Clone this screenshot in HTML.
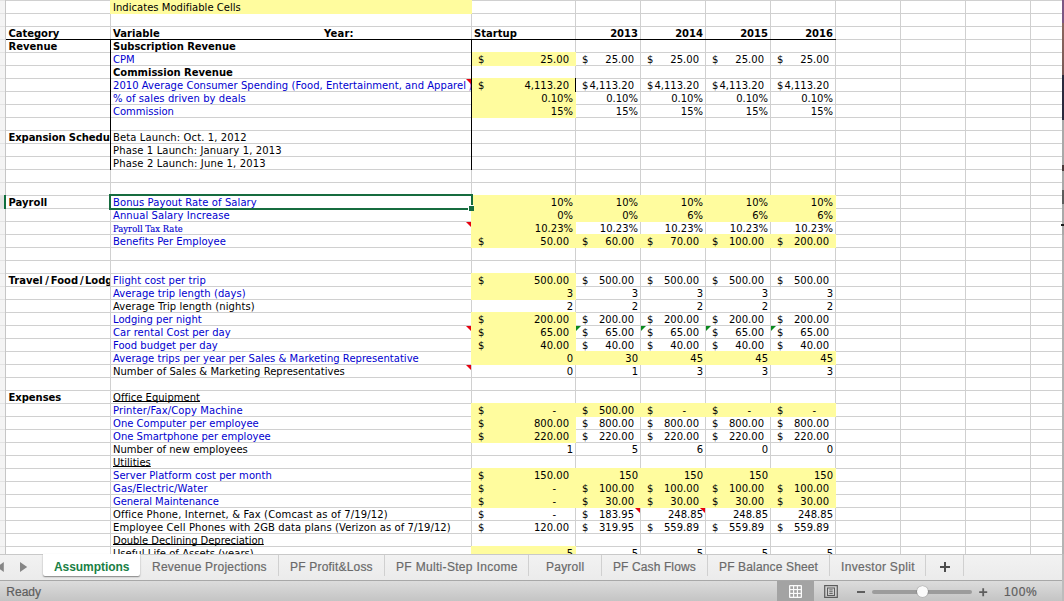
<!DOCTYPE html>
<html><head><meta charset="utf-8"><title>Assumptions</title>
<style>
html,body{margin:0;padding:0;}
body{width:1064px;height:601px;overflow:hidden;background:#fff;position:relative;font-family:"DejaVu Sans","Liberation Sans",sans-serif;font-size:10px;color:#000;}
#sheet{position:absolute;left:0;top:0;width:1064px;height:554px;overflow:hidden;background:#fff;}
#hl{position:absolute;left:0;top:0;width:1064px;height:560px;background:repeating-linear-gradient(to bottom,#d0d0d0 0,#d0d0d0 1px,transparent 1px,transparent 13px);}
.v{position:absolute;top:0;width:1px;height:554px;background:#d0d0d0;}
.y{position:absolute;background:#fffc9e;}
.k{position:absolute;background:#000;}
.t{position:absolute;white-space:pre;line-height:13px;height:13px;margin-top:1px;}
.b{font-weight:bold;}
.bl{color:#0000d0;}
.u{text-decoration:underline;text-decoration-thickness:1px;text-underline-offset:0;text-decoration-skip-ink:none;}
.se{font-family:"DejaVu Serif","Liberation Serif",serif;font-size:8.4px;margin-top:1.5px;-webkit-text-stroke:.15px currentColor;}
.rt{position:absolute;width:0;height:0;border-top:5px solid #e6000f;border-left:5px solid transparent;}
.gt{position:absolute;width:0;height:0;border-top:5px solid #0a8a1e;border-right:5px solid transparent;}
#gut{position:absolute;left:0;top:0;width:5px;height:554px;background:repeating-linear-gradient(to bottom,#e3e3e3 0,#e3e3e3 1px,#f4f4f4 1px,#f4f4f4 13px);}
#tabs{position:absolute;left:0;top:554px;width:1064px;height:26px;background:linear-gradient(#f2f2f2,#ebebeb);border-top:1px solid #c9c9c9;box-sizing:border-box;font-family:"Liberation Sans",sans-serif;font-size:12px;color:#6a6a6a;}
#tabs .tb{position:absolute;top:4px;line-height:16px;white-space:pre;-webkit-text-stroke:.2px currentColor;}
#tabs .sp{position:absolute;top:0;width:1px;height:21px;background:#d0d0d0;}
#status{position:absolute;left:0;top:580px;width:1064px;height:21px;background:linear-gradient(#dcdcdc,#c4c4c4);border-top:1px solid #a8a8a8;box-sizing:border-box;font-family:"Liberation Sans",sans-serif;font-size:12px;color:#5e5e5e;}
</style></head><body>
<div id="sheet">

<div id="hl"></div>
<div class="v" style="left:5px"></div>
<div class="v" style="left:110px"></div>
<div class="v" style="left:471px"></div>
<div class="v" style="left:575px"></div>
<div class="v" style="left:640px"></div>
<div class="v" style="left:705px"></div>
<div class="v" style="left:770px"></div>
<div class="v" style="left:835px"></div>
<div class="v" style="left:900px"></div>
<div class="v" style="left:965px"></div>
<div class="v" style="left:1030px"></div>
<div id="gut"></div>
<div class="v" style="left:5px;background:#c6c6c6"></div>
<div class="y" style="left:110px;top:0;width:362px;height:14px"></div>
<div class="y" style="left:471px;top:52px;width:105px;height:14px"></div>
<div class="y" style="left:471px;top:78px;width:105px;height:40px"></div>
<div class="y" style="left:471px;top:195px;width:365px;height:27px"></div>
<div class="y" style="left:471px;top:221px;width:105px;height:14px"></div>
<div class="y" style="left:471px;top:234px;width:365px;height:14px"></div>
<div class="y" style="left:471px;top:273px;width:105px;height:27px"></div>
<div class="y" style="left:471px;top:312px;width:105px;height:40px"></div>
<div class="y" style="left:471px;top:351px;width:365px;height:14px"></div>
<div class="y" style="left:471px;top:403px;width:365px;height:14px"></div>
<div class="y" style="left:471px;top:416px;width:105px;height:27px"></div>
<div class="y" style="left:471px;top:468px;width:365px;height:40px"></div>
<div class="y" style="left:471px;top:546px;width:105px;height:14px"></div>
<div class="k" style="left:6px;top:39px;width:830px;height:1px"></div>
<div class="k" style="left:110px;top:39px;width:1px;height:131px"></div>
<div class="k" style="left:471px;top:39px;width:1px;height:131px"></div>
<div class="k" style="left:575px;top:78px;width:1px;height:14px"></div>
<span id="t1" class="t b" style="letter-spacing:-0.041px;left:8.5px;top:26px;">Category</span>
<span id="t2" class="t b" style="letter-spacing:-0.000px;left:8.5px;top:39px;">Revenue</span>
<div style="position:absolute;left:6px;top:130px;width:104px;height:14px;overflow:hidden">
<span id="t3" class="t b" style="letter-spacing:-.08px;left:2.5px;top:0px;">Expansion Schedule</span>
</div>
<span id="t4" class="t b" style="letter-spacing:0.017px;left:8.5px;top:195px;">Payroll</span>
<div style="position:absolute;left:6px;top:273px;width:104px;height:14px;overflow:hidden">
<span id="t5" class="t b" style="left:2.5px;top:0px;">Travel<span style="margin:0 1.8px 0 2.7px">/</span>Food<span style="margin:0 1.2px 0 2px">/</span>Lodging</span>
</div>
<span id="t6" class="t b" style="letter-spacing:-0.030px;left:8.5px;top:390px;">Expenses</span>
<span id="t7" class="t " style="letter-spacing:0.025px;left:113px;top:0px;">Indicates Modifiable Cells</span>
<span id="t8" class="t b" style="letter-spacing:0.046px;left:113px;top:26px;">Variable</span>
<span id="t9" class="t b" style="letter-spacing:0.203px;left:324px;top:26px;">Year:</span>
<span id="t10" class="t b" style="letter-spacing:-0.028px;left:113px;top:39px;">Subscription Revenue</span>
<span id="t11" class="t bl" style="letter-spacing:0.051px;left:113px;top:52px;">CPM</span>
<span id="t12" class="t b" style="letter-spacing:-0.016px;left:113px;top:65px;">Commission Revenue</span>
<div style="position:absolute;left:111px;top:78px;width:360px;height:14px;overflow:hidden">
<span id="t13" class="t bl" style="letter-spacing:.04px;left:2px;top:0px;">2010 Average Consumer Spending (Food, Entertainment, and Apparel<span style="margin-left:2.5px">)</span></span>
</div>
<span id="t14" class="t bl" style="letter-spacing:0.067px;left:113px;top:91px;">% of sales driven by deals</span>
<span id="t15" class="t bl" style="letter-spacing:-0.022px;left:113px;top:104px;">Commission</span>
<span id="t16" class="t " style="letter-spacing:0.119px;left:113px;top:130px;">Beta Launch: Oct. 1, 2012</span>
<span id="t17" class="t " style="letter-spacing:0.136px;left:113px;top:143px;">Phase 1 Launch: January 1, 2013</span>
<span id="t18" class="t " style="letter-spacing:0.154px;left:113px;top:156px;">Phase 2 Launch: June 1, 2013</span>
<span id="t19" class="t bl" style="letter-spacing:0.083px;left:113px;top:195px;">Bonus Payout Rate of Salary</span>
<span id="t20" class="t bl" style="letter-spacing:0.089px;left:113px;top:208px;">Annual Salary Increase</span>
<span id="t21" class="t bl se" style="letter-spacing:0.038px;left:113px;top:221px;">Payroll Tax Rate</span>
<span id="t22" class="t bl" style="letter-spacing:0.002px;left:113px;top:234px;">Benefits Per Employee</span>
<span id="t23" class="t bl" style="letter-spacing:0.041px;left:113px;top:273px;">Flight cost per trip</span>
<span id="t24" class="t bl" style="letter-spacing:0.067px;left:113px;top:286px;">Average trip length (days)</span>
<span id="t25" class="t " style="letter-spacing:0.096px;left:113px;top:299px;">Average Trip length (nights)</span>
<span id="t26" class="t bl" style="letter-spacing:0.026px;left:113px;top:312px;">Lodging per night</span>
<span id="t27" class="t bl" style="letter-spacing:0.061px;left:113px;top:325px;">Car rental Cost per day</span>
<span id="t28" class="t bl" style="letter-spacing:0.043px;left:113px;top:338px;">Food budget per day</span>
<span id="t29" class="t bl" style="letter-spacing:0.027px;left:113px;top:351px;">Average trips per year per Sales &amp; Marketing Representative</span>
<span id="t30" class="t " style="letter-spacing:0.025px;left:113px;top:364px;">Number of Sales &amp; Marketing Representatives</span>
<span id="t31" class="t u" style="letter-spacing:0.009px;left:113px;top:390px;">Office Equipment</span>
<span id="t32" class="t bl" style="letter-spacing:0.104px;left:113px;top:403px;">Printer/Fax/Copy Machine</span>
<span id="t33" class="t bl" style="letter-spacing:0.008px;left:113px;top:416px;">One Computer per employee</span>
<span id="t34" class="t bl" style="letter-spacing:0.014px;left:113px;top:429px;">One Smartphone per employee</span>
<span id="t35" class="t " style="letter-spacing:0.009px;left:113px;top:442px;">Number of new employees</span>
<span id="t36" class="t u" style="letter-spacing:0.017px;left:113px;top:455px;">Utilities</span>
<span id="t37" class="t bl" style="letter-spacing:0.043px;left:113px;top:468px;">Server Platform cost per month</span>
<span id="t38" class="t bl" style="letter-spacing:0.130px;left:113px;top:481px;">Gas/Electric/Water</span>
<span id="t39" class="t bl" style="letter-spacing:-0.063px;left:113px;top:494px;">General Maintenance</span>
<span id="t40" class="t " style="letter-spacing:0.139px;left:113px;top:507px;">Office Phone, Internet, &amp; Fax (Comcast as of 7/19/12)</span>
<span id="t41" class="t " style="letter-spacing:0.093px;left:113px;top:520px;">Employee Cell Phones with 2GB data plans (Verizon as of 7/19/12)</span>
<span id="t42" class="t u" style="letter-spacing:-0.052px;left:113px;top:533px;">Double Declining Depreciation</span>
<span id="t43" class="t " style="letter-spacing:0.042px;left:113px;top:546px;">Useful Life of Assets (years)</span>
<span id="t44" class="t b" style="letter-spacing:0.011px;left:474px;top:26px;">Startup</span>
<span id="t45" class="t b" style="right:426px;top:26px;">2013</span>
<span id="t46" class="t b" style="right:361px;top:26px;">2014</span>
<span id="t47" class="t b" style="right:296px;top:26px;">2015</span>
<span id="t48" class="t b" style="right:231px;top:26px;">2016</span>
<span id="t49" class="t " style="left:478px;top:52px;">$</span>
<span id="t50" class="t " style="right:495px;top:52px;">25.00</span>
<span id="t51" class="t " style="left:582px;top:52px;">$</span>
<span id="t52" class="t " style="right:430px;top:52px;">25.00</span>
<span id="t53" class="t " style="left:647px;top:52px;">$</span>
<span id="t54" class="t " style="right:365px;top:52px;">25.00</span>
<span id="t55" class="t " style="left:712px;top:52px;">$</span>
<span id="t56" class="t " style="right:300px;top:52px;">25.00</span>
<span id="t57" class="t " style="left:777px;top:52px;">$</span>
<span id="t58" class="t " style="right:235px;top:52px;">25.00</span>
<span id="t59" class="t " style="left:478px;top:78px;">$</span>
<span id="t60" class="t " style="right:495px;top:78px;">4,113.20</span>
<span id="t61" class="t " style="left:582px;top:78px;">$</span>
<span id="t62" class="t " style="right:430px;top:78px;">4,113.20</span>
<span id="t63" class="t " style="left:647px;top:78px;">$</span>
<span id="t64" class="t " style="right:365px;top:78px;">4,113.20</span>
<span id="t65" class="t " style="left:712px;top:78px;">$</span>
<span id="t66" class="t " style="right:300px;top:78px;">4,113.20</span>
<span id="t67" class="t " style="left:777px;top:78px;">$</span>
<span id="t68" class="t " style="right:235px;top:78px;">4,113.20</span>
<span id="t69" class="t " style="right:491px;top:91px;">0.10%</span>
<span id="t70" class="t " style="right:426px;top:91px;">0.10%</span>
<span id="t71" class="t " style="right:361px;top:91px;">0.10%</span>
<span id="t72" class="t " style="right:296px;top:91px;">0.10%</span>
<span id="t73" class="t " style="right:231px;top:91px;">0.10%</span>
<span id="t74" class="t " style="right:491px;top:104px;">15%</span>
<span id="t75" class="t " style="right:426px;top:104px;">15%</span>
<span id="t76" class="t " style="right:361px;top:104px;">15%</span>
<span id="t77" class="t " style="right:296px;top:104px;">15%</span>
<span id="t78" class="t " style="right:231px;top:104px;">15%</span>
<span id="t79" class="t " style="right:491px;top:195px;">10%</span>
<span id="t80" class="t " style="right:426px;top:195px;">10%</span>
<span id="t81" class="t " style="right:361px;top:195px;">10%</span>
<span id="t82" class="t " style="right:296px;top:195px;">10%</span>
<span id="t83" class="t " style="right:231px;top:195px;">10%</span>
<span id="t84" class="t " style="right:491px;top:208px;">0%</span>
<span id="t85" class="t " style="right:426px;top:208px;">0%</span>
<span id="t86" class="t " style="right:361px;top:208px;">6%</span>
<span id="t87" class="t " style="right:296px;top:208px;">6%</span>
<span id="t88" class="t " style="right:231px;top:208px;">6%</span>
<span id="t89" class="t " style="right:491px;top:221px;">10.23%</span>
<span id="t90" class="t " style="right:426px;top:221px;">10.23%</span>
<span id="t91" class="t " style="right:361px;top:221px;">10.23%</span>
<span id="t92" class="t " style="right:296px;top:221px;">10.23%</span>
<span id="t93" class="t " style="right:231px;top:221px;">10.23%</span>
<span id="t94" class="t " style="left:478px;top:234px;">$</span>
<span id="t95" class="t " style="right:495px;top:234px;">50.00</span>
<span id="t96" class="t " style="left:582px;top:234px;">$</span>
<span id="t97" class="t " style="right:430px;top:234px;">60.00</span>
<span id="t98" class="t " style="left:647px;top:234px;">$</span>
<span id="t99" class="t " style="right:365px;top:234px;">70.00</span>
<span id="t100" class="t " style="left:712px;top:234px;">$</span>
<span id="t101" class="t " style="right:300px;top:234px;">100.00</span>
<span id="t102" class="t " style="left:777px;top:234px;">$</span>
<span id="t103" class="t " style="right:235px;top:234px;">200.00</span>
<span id="t104" class="t " style="left:478px;top:273px;">$</span>
<span id="t105" class="t " style="right:495px;top:273px;">500.00</span>
<span id="t106" class="t " style="left:582px;top:273px;">$</span>
<span id="t107" class="t " style="right:430px;top:273px;">500.00</span>
<span id="t108" class="t " style="left:647px;top:273px;">$</span>
<span id="t109" class="t " style="right:365px;top:273px;">500.00</span>
<span id="t110" class="t " style="left:712px;top:273px;">$</span>
<span id="t111" class="t " style="right:300px;top:273px;">500.00</span>
<span id="t112" class="t " style="left:777px;top:273px;">$</span>
<span id="t113" class="t " style="right:235px;top:273px;">500.00</span>
<span id="t114" class="t " style="right:491px;top:286px;">3</span>
<span id="t115" class="t " style="right:426px;top:286px;">3</span>
<span id="t116" class="t " style="right:361px;top:286px;">3</span>
<span id="t117" class="t " style="right:296px;top:286px;">3</span>
<span id="t118" class="t " style="right:231px;top:286px;">3</span>
<span id="t119" class="t " style="right:491px;top:299px;">2</span>
<span id="t120" class="t " style="right:426px;top:299px;">2</span>
<span id="t121" class="t " style="right:361px;top:299px;">2</span>
<span id="t122" class="t " style="right:296px;top:299px;">2</span>
<span id="t123" class="t " style="right:231px;top:299px;">2</span>
<span id="t124" class="t " style="left:478px;top:312px;">$</span>
<span id="t125" class="t " style="right:495px;top:312px;">200.00</span>
<span id="t126" class="t " style="left:582px;top:312px;">$</span>
<span id="t127" class="t " style="right:430px;top:312px;">200.00</span>
<span id="t128" class="t " style="left:647px;top:312px;">$</span>
<span id="t129" class="t " style="right:365px;top:312px;">200.00</span>
<span id="t130" class="t " style="left:712px;top:312px;">$</span>
<span id="t131" class="t " style="right:300px;top:312px;">200.00</span>
<span id="t132" class="t " style="left:777px;top:312px;">$</span>
<span id="t133" class="t " style="right:235px;top:312px;">200.00</span>
<span id="t134" class="t " style="left:478px;top:325px;">$</span>
<span id="t135" class="t " style="right:495px;top:325px;">65.00</span>
<span id="t136" class="t " style="left:582px;top:325px;">$</span>
<span id="t137" class="t " style="right:430px;top:325px;">65.00</span>
<span id="t138" class="t " style="left:647px;top:325px;">$</span>
<span id="t139" class="t " style="right:365px;top:325px;">65.00</span>
<span id="t140" class="t " style="left:712px;top:325px;">$</span>
<span id="t141" class="t " style="right:300px;top:325px;">65.00</span>
<span id="t142" class="t " style="left:777px;top:325px;">$</span>
<span id="t143" class="t " style="right:235px;top:325px;">65.00</span>
<span id="t144" class="t " style="left:478px;top:338px;">$</span>
<span id="t145" class="t " style="right:495px;top:338px;">40.00</span>
<span id="t146" class="t " style="left:582px;top:338px;">$</span>
<span id="t147" class="t " style="right:430px;top:338px;">40.00</span>
<span id="t148" class="t " style="left:647px;top:338px;">$</span>
<span id="t149" class="t " style="right:365px;top:338px;">40.00</span>
<span id="t150" class="t " style="left:712px;top:338px;">$</span>
<span id="t151" class="t " style="right:300px;top:338px;">40.00</span>
<span id="t152" class="t " style="left:777px;top:338px;">$</span>
<span id="t153" class="t " style="right:235px;top:338px;">40.00</span>
<span id="t154" class="t " style="right:491px;top:351px;">0</span>
<span id="t155" class="t " style="right:426px;top:351px;">30</span>
<span id="t156" class="t " style="right:361px;top:351px;">45</span>
<span id="t157" class="t " style="right:296px;top:351px;">45</span>
<span id="t158" class="t " style="right:231px;top:351px;">45</span>
<span id="t159" class="t " style="right:491px;top:364px;">0</span>
<span id="t160" class="t " style="right:426px;top:364px;">1</span>
<span id="t161" class="t " style="right:361px;top:364px;">3</span>
<span id="t162" class="t " style="right:296px;top:364px;">3</span>
<span id="t163" class="t " style="right:231px;top:364px;">3</span>
<span id="t164" class="t " style="left:478px;top:403px;">$</span>
<span id="t165" class="t " style="right:508px;top:403px;">-</span>
<span id="t166" class="t " style="left:582px;top:403px;">$</span>
<span id="t167" class="t " style="right:430px;top:403px;">500.00</span>
<span id="t168" class="t " style="left:647px;top:403px;">$</span>
<span id="t169" class="t " style="right:378px;top:403px;">-</span>
<span id="t170" class="t " style="left:712px;top:403px;">$</span>
<span id="t171" class="t " style="right:313px;top:403px;">-</span>
<span id="t172" class="t " style="left:777px;top:403px;">$</span>
<span id="t173" class="t " style="right:248px;top:403px;">-</span>
<span id="t174" class="t " style="left:478px;top:416px;">$</span>
<span id="t175" class="t " style="right:495px;top:416px;">800.00</span>
<span id="t176" class="t " style="left:582px;top:416px;">$</span>
<span id="t177" class="t " style="right:430px;top:416px;">800.00</span>
<span id="t178" class="t " style="left:647px;top:416px;">$</span>
<span id="t179" class="t " style="right:365px;top:416px;">800.00</span>
<span id="t180" class="t " style="left:712px;top:416px;">$</span>
<span id="t181" class="t " style="right:300px;top:416px;">800.00</span>
<span id="t182" class="t " style="left:777px;top:416px;">$</span>
<span id="t183" class="t " style="right:235px;top:416px;">800.00</span>
<span id="t184" class="t " style="left:478px;top:429px;">$</span>
<span id="t185" class="t " style="right:495px;top:429px;">220.00</span>
<span id="t186" class="t " style="left:582px;top:429px;">$</span>
<span id="t187" class="t " style="right:430px;top:429px;">220.00</span>
<span id="t188" class="t " style="left:647px;top:429px;">$</span>
<span id="t189" class="t " style="right:365px;top:429px;">220.00</span>
<span id="t190" class="t " style="left:712px;top:429px;">$</span>
<span id="t191" class="t " style="right:300px;top:429px;">220.00</span>
<span id="t192" class="t " style="left:777px;top:429px;">$</span>
<span id="t193" class="t " style="right:235px;top:429px;">220.00</span>
<span id="t194" class="t " style="right:491px;top:442px;">1</span>
<span id="t195" class="t " style="right:426px;top:442px;">5</span>
<span id="t196" class="t " style="right:361px;top:442px;">6</span>
<span id="t197" class="t " style="right:296px;top:442px;">0</span>
<span id="t198" class="t " style="right:231px;top:442px;">0</span>
<span id="t199" class="t " style="left:478px;top:468px;">$</span>
<span id="t200" class="t " style="right:495px;top:468px;">150.00</span>
<span id="t201" class="t " style="right:426px;top:468px;">150</span>
<span id="t202" class="t " style="right:361px;top:468px;">150</span>
<span id="t203" class="t " style="right:296px;top:468px;">150</span>
<span id="t204" class="t " style="right:231px;top:468px;">150</span>
<span id="t205" class="t " style="left:478px;top:481px;">$</span>
<span id="t206" class="t " style="right:508px;top:481px;">-</span>
<span id="t207" class="t " style="left:582px;top:481px;">$</span>
<span id="t208" class="t " style="right:430px;top:481px;">100.00</span>
<span id="t209" class="t " style="left:647px;top:481px;">$</span>
<span id="t210" class="t " style="right:365px;top:481px;">100.00</span>
<span id="t211" class="t " style="left:712px;top:481px;">$</span>
<span id="t212" class="t " style="right:300px;top:481px;">100.00</span>
<span id="t213" class="t " style="left:777px;top:481px;">$</span>
<span id="t214" class="t " style="right:235px;top:481px;">100.00</span>
<span id="t215" class="t " style="left:478px;top:494px;">$</span>
<span id="t216" class="t " style="right:508px;top:494px;">-</span>
<span id="t217" class="t " style="left:582px;top:494px;">$</span>
<span id="t218" class="t " style="right:430px;top:494px;">30.00</span>
<span id="t219" class="t " style="left:647px;top:494px;">$</span>
<span id="t220" class="t " style="right:365px;top:494px;">30.00</span>
<span id="t221" class="t " style="left:712px;top:494px;">$</span>
<span id="t222" class="t " style="right:300px;top:494px;">30.00</span>
<span id="t223" class="t " style="left:777px;top:494px;">$</span>
<span id="t224" class="t " style="right:235px;top:494px;">30.00</span>
<span id="t225" class="t " style="left:478px;top:507px;">$</span>
<span id="t226" class="t " style="right:508px;top:507px;">-</span>
<span id="t227" class="t " style="left:582px;top:507px;">$</span>
<span id="t228" class="t " style="right:430px;top:507px;">183.95</span>
<span id="t229" class="t " style="right:361px;top:507px;">248.85</span>
<span id="t230" class="t " style="right:296px;top:507px;">248.85</span>
<span id="t231" class="t " style="right:231px;top:507px;">248.85</span>
<span id="t232" class="t " style="left:478px;top:520px;">$</span>
<span id="t233" class="t " style="right:495px;top:520px;">120.00</span>
<span id="t234" class="t " style="left:582px;top:520px;">$</span>
<span id="t235" class="t " style="right:430px;top:520px;">319.95</span>
<span id="t236" class="t " style="left:647px;top:520px;">$</span>
<span id="t237" class="t " style="right:365px;top:520px;">559.89</span>
<span id="t238" class="t " style="left:712px;top:520px;">$</span>
<span id="t239" class="t " style="right:300px;top:520px;">559.89</span>
<span id="t240" class="t " style="left:777px;top:520px;">$</span>
<span id="t241" class="t " style="right:235px;top:520px;">559.89</span>
<span id="t242" class="t " style="right:491px;top:546px;">5</span>
<span id="t243" class="t " style="right:426px;top:546px;">5</span>
<span id="t244" class="t " style="right:361px;top:546px;">5</span>
<span id="t245" class="t " style="right:296px;top:546px;">5</span>
<span id="t246" class="t " style="right:231px;top:546px;">5</span>
<div class="rt" style="left:466px;top:79px"></div>
<div class="rt" style="left:466px;top:222px"></div>
<div class="rt" style="left:466px;top:326px"></div>
<div class="rt" style="left:466px;top:365px"></div>
<div class="rt" style="left:635px;top:508px"></div>
<div class="rt" style="left:700px;top:508px"></div>
<div class="gt" style="left:576px;top:326px"></div>
<div class="gt" style="left:641px;top:326px"></div>
<div class="gt" style="left:706px;top:326px"></div>
<div class="gt" style="left:771px;top:326px"></div>
<div style="position:absolute;left:0;top:196px;width:4px;height:12px;background:#e2e2e2"></div>
<div style="position:absolute;left:4px;top:195px;width:2px;height:14px;background:#0f6e3d"></div>
<div style="position:absolute;left:109px;top:194px;width:364px;height:16px;box-sizing:border-box;border:2px solid #166c3f"></div>
<div style="position:absolute;left:468px;top:205px;width:5px;height:5px;background:#166c3f;border:1px solid #fff;border-right:0;border-bottom:0"></div>
<div style="position:absolute;left:1062px;top:0;width:2px;height:554px;background:linear-gradient(to bottom,#7b5783 0,#7b5783 23px,#8a675f 23px,#7a5a58 75px,#2b2a3d 75px,#2b2a3d 120px,#a9a9a9 120px,#a9a9a9 235px,#b2b2b2 235px,#b4b4b4 554px)"></div>
<div style="position:absolute;left:1062px;top:165px;width:2px;height:6px;background:#4a3a3a"></div>
<div style="position:absolute;left:1062px;top:190px;width:2px;height:14px;background:#5c5c5c"></div>
<div style="position:absolute;left:1061px;top:224px;width:3px;height:2px;background:#1c1c1c"></div>
</div>
<div id="tabs">
<div style="position:absolute;left:43px;top:-1px;width:97px;height:22px;background:#fff;border-radius:0 0 2px 2px;box-shadow:0 1px 1.5px rgba(0,0,0,.45)"></div>
<svg style="position:absolute;left:0;top:6px" width="32" height="12" viewBox="0 0 32 12"><path d="M3.8 1 L-3.4 6 L3.8 11 Z" fill="#868686"/><path d="M20 1 L27.2 6 L20 11 Z" fill="#868686"/></svg>
<span id="t247" class="tb" style="left:54px;letter-spacing:-0.066px;color:#1a7f45;font-weight:bold;-webkit-text-stroke:0;">Assumptions</span>
<span id="t248" class="tb" style="left:152px;letter-spacing:0.214px;">Revenue Projections</span>
<span id="t249" class="tb" style="left:290px;letter-spacing:0.197px;">PF Profit&amp;Loss</span>
<span id="t250" class="tb" style="left:396px;letter-spacing:0.321px;">PF Multi-Step Income</span>
<span id="t251" class="tb" style="left:546px;letter-spacing:0.232px;">Payroll</span>
<span id="t252" class="tb" style="left:613px;letter-spacing:0.112px;">PF Cash Flows</span>
<span id="t253" class="tb" style="left:719px;letter-spacing:0.147px;">PF Balance Sheet</span>
<span id="t254" class="tb" style="left:841px;letter-spacing:0.316px;">Investor Split</span>
<div class="sp" style="left:278px"></div>
<div class="sp" style="left:384px"></div>
<div class="sp" style="left:528px"></div>
<div class="sp" style="left:601px"></div>
<div class="sp" style="left:707px"></div>
<div class="sp" style="left:829px"></div>
<div class="sp" style="left:925px"></div>
<div class="sp" style="left:963px"></div>
<svg style="position:absolute;left:939px;top:6px" width="12" height="12" viewBox="0 0 12 12"><path d="M6 1V11M1 6H11" stroke="#4d4d4d" stroke-width="2" fill="none"/></svg>
</div>
<div id="status">
<span style="position:absolute;left:6.3px;top:3px;line-height:16px;-webkit-text-stroke:.2px currentColor">Ready</span>
<div style="position:absolute;left:777px;top:0;width:37px;height:20px;background:#a3a3a3"></div>
<svg style="position:absolute;left:789px;top:4px" width="13" height="13" viewBox="0 0 13 13"><rect x="0" y="0" width="13" height="13" rx="1" fill="#fafafa"/><g fill="#a3a3a3"><rect x="1.3" y="1.3" width="2.7" height="2.7"/><rect x="5.15" y="1.3" width="2.7" height="2.7"/><rect x="9" y="1.3" width="2.7" height="2.7"/><rect x="1.3" y="5.15" width="2.7" height="2.7"/><rect x="5.15" y="5.15" width="2.7" height="2.7"/><rect x="9" y="5.15" width="2.7" height="2.7"/><rect x="1.3" y="9" width="2.7" height="2.7"/><rect x="5.15" y="9" width="2.7" height="2.7"/><rect x="9" y="9" width="2.7" height="2.7"/></g></svg>
<svg style="position:absolute;left:824px;top:4px" width="14" height="13" viewBox="0 0 14 13"><rect x=".7" y=".6" width="12.6" height="11.8" fill="none" stroke="#5c5c5c" stroke-width="1.2"/><rect x="3.5" y="3" width="7" height="7.5" fill="none" stroke="#5c5c5c" stroke-width="1"/><path d="M5.3 4.9H8.7M5.3 6.7H8.7M5.3 8.5H8.7" stroke="#5c5c5c" stroke-width=".9" fill="none"/></svg>
<div style="position:absolute;left:857px;top:10px;width:8px;height:2px;background:#5e5e5e"></div>
<div style="position:absolute;left:872px;top:9px;width:100px;height:4px;border-radius:2px;background:#9c9c9c"></div>
<div style="position:absolute;left:916.8px;top:4.8px;width:11.4px;height:11.4px;border-radius:50%;background:#fbfbfb;box-shadow:0 0 1px .3px rgba(0,0,0,.35)"></div>
<svg style="position:absolute;left:979px;top:7px" width="9" height="9" viewBox="0 0 9 9"><path d="M4.2 .2V8.2M.2 4.2H8.2" stroke="#5e5e5e" stroke-width="1.8" fill="none"/></svg>
<span style="position:absolute;left:1004px;top:3px;line-height:16px;letter-spacing:.65px;-webkit-text-stroke:.2px currentColor">100%</span>
</div>
<div style="position:absolute;left:1062px;top:554px;width:2px;height:47px;background:#bcbcbc"></div>
</body></html>
